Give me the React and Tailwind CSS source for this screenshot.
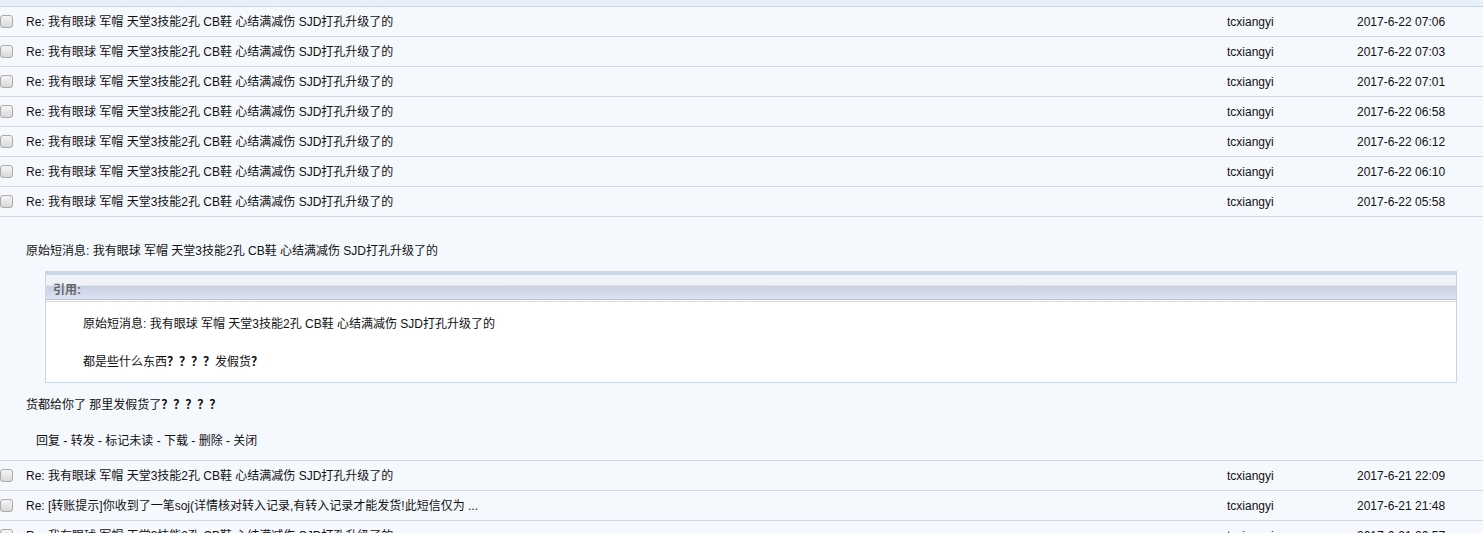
import React from "react";

const subject = "Re: 我有眼球 军帽 天堂3技能2孔 CB鞋 心结满减伤 SJD打孔升级了的";

const before = [
  { title: subject, author: "tcxiangyi", date: "2017-6-22 07:06" },
  { title: subject, author: "tcxiangyi", date: "2017-6-22 07:03" },
  { title: subject, author: "tcxiangyi", date: "2017-6-22 07:01" },
  { title: subject, author: "tcxiangyi", date: "2017-6-22 06:58" },
  { title: subject, author: "tcxiangyi", date: "2017-6-22 06:12" },
  { title: subject, author: "tcxiangyi", date: "2017-6-22 06:10" },
  { title: subject, author: "tcxiangyi", date: "2017-6-22 05:58" },
];

const after = [
  { title: subject, author: "tcxiangyi", date: "2017-6-21 22:09" },
  {
    title: "Re: [转账提示]你收到了一笔soj(详情核对转入记录,有转入记录才能发货!此短信仅为 ...",
    author: "tcxiangyi",
    date: "2017-6-21 21:48",
  },
  { title: subject, author: "tcxiangyi", date: "2017-6-21 20:57" },
];

function Checkbox() {
  return (
    <span className="block w-[13px] h-[13px] rounded-[3px] border border-[#a9a9a9] bg-gradient-to-b from-[#f6f6f6] to-[#d9d9d9]" />
  );
}

function MessageRow({ title, author, date }) {
  return (
    <div className="flex items-center h-[30px] border-b border-[#c9d8ea]">
      <div className="w-[26px] shrink-0 flex items-center">
        <Checkbox />
      </div>
      <div className="flex-1 min-w-0 truncate">{title}</div>
      <div className="w-[130px] shrink-0">{author}</div>
      <div className="w-[126px] shrink-0">{date}</div>
    </div>
  );
}

function Quote() {
  return (
    <div className="mt-[11px] ml-[19px] mr-[26px] border border-[#c8d6e8] border-t-[4px] bg-white">
      <div className="h-[25px] flex items-end pl-[7px] font-bold text-[#666] bg-[linear-gradient(to_bottom,#f1f3f7_0%,#eef1f5_42%,#cad2e4_46%,#d3daea_80%,#dfe4ee_100%)] border-b border-[#b3bed7]">
        引用:
      </div>
      <div className="border-t border-[#d6deec] mt-[1px] pl-[37px] pt-[13px] pb-[11px]">
        <p>原始短消息: 我有眼球 军帽 天堂3技能2孔 CB鞋 心结满减伤 SJD打孔升级了的</p>
        <p className="mt-[20px]">
          都是些什么东西<b>？？？？</b>发假货<b>？</b>
        </p>
      </div>
    </div>
  );
}

function OpenMessage() {
  return (
    <div className="pt-[25px] pb-[10px] border-b border-[#c9d8ea]">
      <p className="pl-[26px]">原始短消息: 我有眼球 军帽 天堂3技能2孔 CB鞋 心结满减伤 SJD打孔升级了的</p>
      <div className="pl-[26px]">
        <Quote />
      </div>
      <p className="pl-[26px] mt-[13px]">
        货都给你了 那里发假货了<b>？？？？？</b>
      </p>
      <p className="pl-[36px] mt-[18px]">回复 - 转发 - 标记未读 - 下载 - 删除 - 关闭</p>
    </div>
  );
}

export default function App() {
  return (
    <div className="h-[533px] overflow-hidden bg-[#f5f9fe] text-[12px] leading-[18px] text-[#111] font-['Liberation_Sans','Noto_Sans_CJK_SC',sans-serif]">
      <div className="h-[7px] bg-[#e8f0fa] border-b border-[#c9d8ea]" />
      {before.map((m, i) => (
        <MessageRow key={i} {...m} />
      ))}
      <OpenMessage />
      {after.map((m, i) => (
        <MessageRow key={i} {...m} />
      ))}
    </div>
  );
}
